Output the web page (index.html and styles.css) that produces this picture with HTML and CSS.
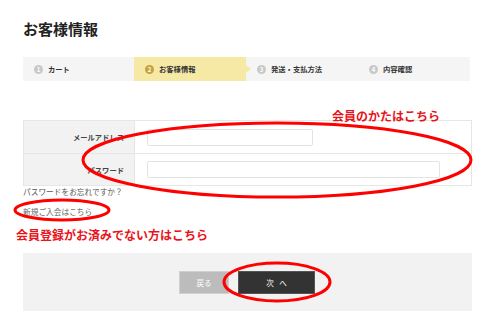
FILE: index.html
```html
<!DOCTYPE html>
<html lang="ja">
<head>
<meta charset="utf-8">
<link rel="stylesheet" href="styles.css">
</head>
<body>
<div class="page">
  <h1 class="title">お客様情報</h1>
  <ol class="steps">
    <li class="step"><span class="num">1</span>カート</li>
    <li class="step active"><span class="num">2</span>お客様情報</li>
    <li class="step"><span class="num">3</span>発送・支払方法</li>
    <li class="step"><span class="num">4</span>内容確認</li>
  </ol>
  <div class="form">
    <div class="row">
      <div class="label">メールアドレス</div>
      <div class="field"><input class="input short" type="text"></div>
    </div>
    <div class="row">
      <div class="label">パスワード</div>
      <div class="field"><input class="input long" type="password"></div>
    </div>
  </div>
  <p class="forgot">パスワードをお忘れですか？</p>
  <p class="signup">新規ご入会はこちら</p>
  <p class="note">会員登録がお済みでない方はこちら</p>
  <div class="actions">
    <button class="btn back">戻る</button>
    <button class="btn next">次 へ</button>
  </div>
</div>
<p class="note member">会員のかたはこちら</p>
<svg class="marks" width="500" height="318" viewBox="0 0 500 318">
  <ellipse cx="277" cy="160" rx="194" ry="37" />
  <ellipse cx="62" cy="210" rx="47" ry="10" />
  <ellipse cx="277" cy="282" rx="53" ry="19" />
</svg>
</body>
</html>
```
FILE: styles.css
```css
* { box-sizing: border-box; }
html, body { margin: 0; padding: 0; background: #fff; }
body {
  width: 500px;
  height: 318px;
  position: relative;
  overflow: hidden;
  font-family: "Noto Sans CJK JP", "Noto Sans", sans-serif;
  color: #333;
}
.page { padding: 20px 28px 0 23px; }
.title {
  margin: 0;
  font-size: 15px;
  line-height: 18px;
  font-weight: 700;
  color: #222;
}
.steps {
  list-style: none;
  margin: 19px 0 0;
  padding: 0;
  width: 447px;
  height: 24px;
  display: flex;
  background: #f5f5f5;
}
.step {
  position: relative;
  flex: 0 0 112px;
  display: flex;
  align-items: center;
  padding-left: 11px;
  font-size: 7.3px;
  font-weight: 700;
  color: #333;
}
.step:first-child { flex-basis: 111px; }
.step.active { background: #f6e9a6; }
.step.active::after {
  content: "";
  position: absolute;
  right: -5px;
  top: 8px;
  border-style: solid;
  border-width: 4px 0 4px 5px;
  border-color: transparent transparent transparent #f6e9a6;
}
.num {
  width: 9px;
  height: 9px;
  border-radius: 50%;
  background: #c8c8c8;
  color: #fff;
  font-size: 6px;
  line-height: 9px;
  text-align: center;
  margin-right: 5px;
}
.active .num { background: #c4a43a; }
.form {
  margin-top: 39px;
  width: 449px;
  border: 1px solid #e6e6e6;
}
.row { display: flex; height: 32px; }
.row + .row { border-top: 1px solid #e6e6e6; }
.label {
  width: 111px;
  background: #f2f2f2;
  border-right: 1px solid #e6e6e6;
  display: flex;
  align-items: center;
  justify-content: flex-end;
  padding-right: 10px;
  font-size: 7.3px;
  font-weight: 700;
  color: #444;
}
.field { flex: 1; display: flex; align-items: center; padding-left: 12px; }
.input {
  height: 17px;
  border: 1px solid #e3e3e3;
  border-radius: 2px;
  background: #fff;
  padding: 0;
  margin: 0;
}
.short { width: 166px; }
.long { width: 293px; }
.forgot, .signup {
  margin: 0;
  font-size: 7.7px;
  line-height: 12px;
  color: #555;
}
.signup { margin-top: 8px; color: #666; }
.note {
  margin: 10px 0 0 -7px;
  font-size: 12px;
  line-height: 14px;
  font-weight: 700;
  color: #e8141c;
}
.member {
  position: absolute;
  left: 332px;
  top: 109px;
  margin: 0;
}
.actions {
  margin-top: 11px;
  width: 449px;
  height: 58px;
  background: #f2f2f2;
  display: flex;
  justify-content: center;
  align-items: flex-start;
  gap: 9px;
  padding-top: 18px;
  padding-right: 1px;
}
.btn {
  height: 23px;
  font-family: inherit;
  font-size: 7.5px;
  color: #fff;
  padding: 0;
  margin: 0;
}
.back { width: 50px; background: #bcbcbc; border: 1px solid #d0d0d0; }
.next { width: 77px; background: #333; border: 1px solid #555; word-spacing: 4px; }
.marks {
  position: absolute;
  left: 0;
  top: 0;
  pointer-events: none;
}
.marks ellipse { fill: none; stroke: #f00; stroke-width: 3; }
```
